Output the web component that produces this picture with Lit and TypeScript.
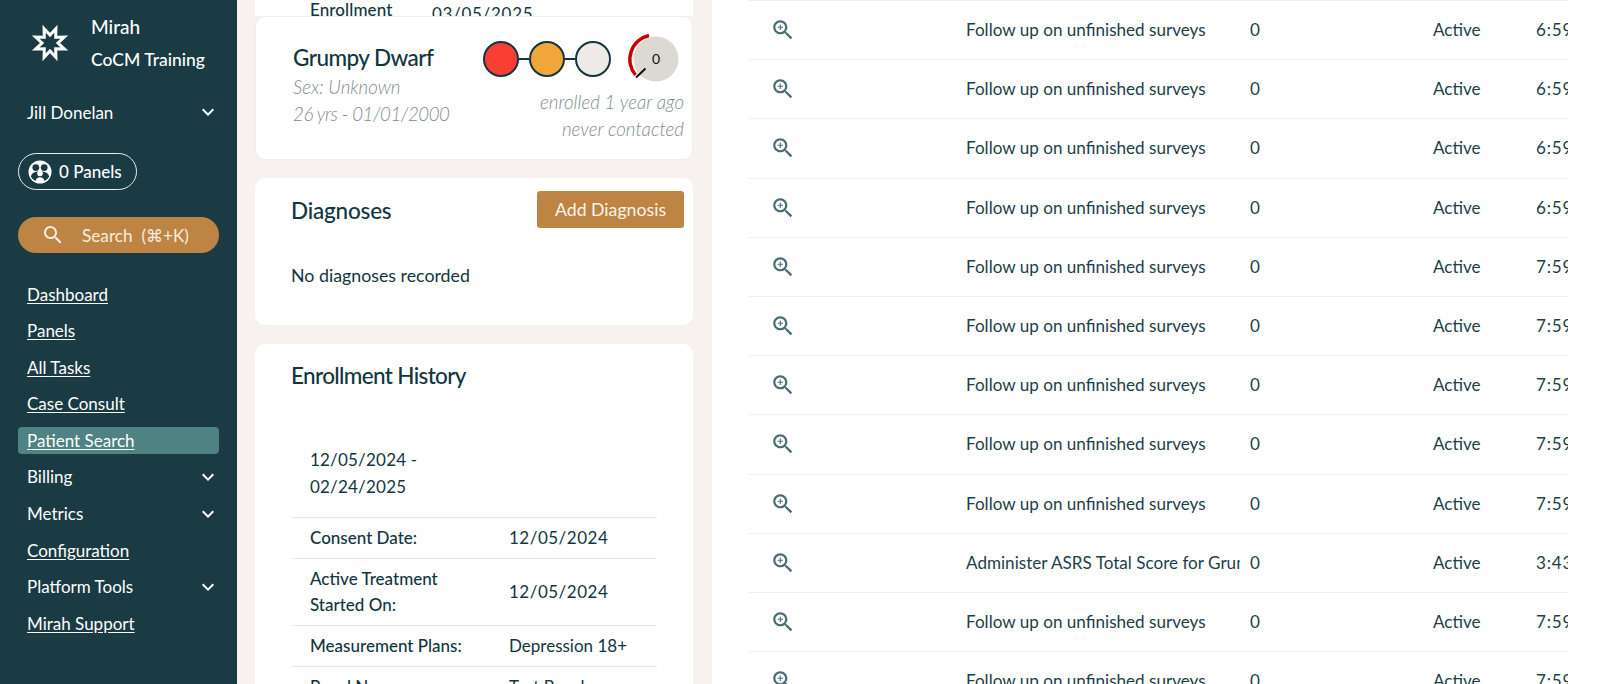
import { LitElement, html, css, svg } from 'lit';
import { customElement } from 'lit/decorators.js';

const chevron = html`<svg class="chev" viewBox="0 0 24 24" width="24" height="24"><path fill="currentColor" d="M16.59 8.59 12 13.17 7.41 8.59 6 10l6 6 6-6z"/></svg>`;

const zoomIcon = html`<svg class="zoom" viewBox="0 0 24 24" width="26" height="26"><path fill="currentColor" d="M15.5 14h-.79l-.28-.27C15.41 12.59 16 11.11 16 9.5 16 5.91 13.09 3 9.5 3S3 5.91 3 9.5 5.91 16 9.5 16c1.61 0 3.09-.59 4.23-1.57l.27.28v.79l5 4.99L20.49 19l-4.99-5zm-6 0C7.01 14 5 11.99 5 9.5S7.01 5 9.5 5 14 7.01 14 9.5 11.99 14 9.5 14z"/><path fill="currentColor" d="M12 10h-2v2H9v-2H7V9h2V7h1v2h2v1z"/></svg>`;

const starPoints = () => {
	const pts: string[] = [];
	for (let i = 0; i < 16; i++) {
		const r = i % 2 === 0 ? 15.5 : 8;
		const a = ((i * 22.5 + 22.5) * Math.PI) / 180;
		pts.push(`${(20 + r * Math.sin(a)).toFixed(1)},${(20 - r * Math.cos(a)).toFixed(1)}`);
	}
	return pts.join(' ');
};

type NavItem = { label: string; link?: boolean; open?: boolean; active?: boolean };

const NAV: NavItem[] = [
	{ label: 'Dashboard', link: true },
	{ label: 'Panels', link: true },
	{ label: 'All Tasks', link: true },
	{ label: 'Case Consult', link: true },
	{ label: 'Patient Search', link: true, active: true },
	{ label: 'Billing', open: true },
	{ label: 'Metrics', open: true },
	{ label: 'Configuration', link: true },
	{ label: 'Platform Tools', open: true },
	{ label: 'Mirah Support', link: true },
];

const FOLLOW = 'Follow up on unfinished surveys';
const TASKS = [
	[FOLLOW, '6:59 PM'],
	[FOLLOW, '6:59 PM'],
	[FOLLOW, '6:59 PM'],
	[FOLLOW, '6:59 PM'],
	[FOLLOW, '7:59 PM'],
	[FOLLOW, '7:59 PM'],
	[FOLLOW, '7:59 PM'],
	[FOLLOW, '7:59 PM'],
	[FOLLOW, '7:59 PM'],
	['Administer ASRS Total Score for Grumpy Dwarf', '3:43 PM'],
	[FOLLOW, '7:59 PM'],
	[FOLLOW, '7:59 PM'],
];

const HISTORY = [
	['Consent Date:', '12/05/2024', 'num'],
	['Active Treatment Started On:', '12/05/2024', 'num'],
	['Measurement Plans:', 'Depression 18+', ''],
	['Panel Name:', 'Test Panel', ''],
];

@customElement('app-root')
export class AppRoot extends LitElement {
	static styles = css`
		:host {
			display: flex;
			width: 1600px;
			height: 684px;
			overflow: hidden;
			font-family: Lato, 'Open Sans', sans-serif;
			font-size: 17px;
			color: #123640;
			background: #f7f2ef;
		}
		.side {
			width: 237px;
			flex: none;
			box-sizing: border-box;
			background: #1a3a44;
			color: #fff;
			padding: 0 18px;
		}
		.brand {
			display: flex;
			height: 88px;
			align-items: center;
			gap: 21px;
			padding-left: 12px;
			box-sizing: border-box;
		}
		.brand svg {
			margin-bottom: 2px;
		}
		.brand-text {
			display: flex;
			flex-direction: column;
			gap: 11px;
			font-size: 17.5px;
			line-height: 22px;
			font-weight: 500;
			margin-bottom: 2px;
		}
		.brand-name {
			font-size: 19px;
		}
		.user {
			display: flex;
			align-items: center;
			justify-content: space-between;
			height: 26px;
			margin-top: 11px;
			padding: 0 0 0 9px;
			font-size: 17px;
		}
		.chev {
			margin-right: -1px;
			color: #fff;
		}
		.pill {
			display: inline-flex;
			align-items: center;
			gap: 7px;
			box-sizing: border-box;
			height: 37px;
			width: 119px;
			margin-top: 28px;
			padding-left: 9px;
			border: 1.5px solid #e8eeee;
			border-radius: 19px;
			font-size: 17px;
			font-weight: 500;
		}
		.search {
			display: flex;
			align-items: center;
			box-sizing: border-box;
			height: 36px;
			margin-top: 27px;
			padding-left: 23px;
			background: #bd8443;
			border-radius: 18px;
			font-size: 17.2px;
			color: #f6ece0;
			white-space: pre;
		}
		.search svg {
			margin-right: 17px;
		}
		.nav {
			display: flex;
			flex-direction: column;
			margin-top: 27.5px;
		}
		.nav-item {
			display: flex;
			align-items: center;
			justify-content: space-between;
			height: 27px;
			margin-bottom: 9.6px;
			padding-left: 9px;
			border-radius: 4px;
			font-size: 17px;
		}
		.nav-item.link span {
			text-decoration: underline;
			text-underline-offset: 2px;
		}
		.nav-item.active {
			background: #4f8283;
		}
		.main {
			flex: 1;
			display: flex;
			min-width: 0;
		}
		.left {
			width: 438px;
			flex: none;
			margin: 0 19px 0 18px;
			display: flex;
			flex-direction: column;
		}
		.peek {
			height: 16px;
			flex: none;
			overflow: hidden;
			background: #fff;
			display: flex;
			padding-left: 55px;
			font-size: 17px;
			line-height: 20px;
		}
		.peek b {
			width: 122px;
			font-weight: 500;
			letter-spacing: 0.1px;
		}
		.peek span {
			margin-top: 4px;
			letter-spacing: 0.7px;
		}
		.card {
			background: #fff;
			border-radius: 10px;
			flex: none;
			box-sizing: border-box;
		}
		.head {
			height: 144px;
			border: 1px solid #efeeec;
			display: flex;
			justify-content: space-between;
			padding: 25px 8px 0 37px;
		}
		.name {
			font-size: 22.5px;
			line-height: 32px;
			font-weight: 500;
			letter-spacing: -0.55px;
		}
		.muted {
			font-style: italic;
			font-weight: 300;
			font-size: 18.7px;
			line-height: 27px;
			color: #7f8c8f;
		}
		.tight {
			letter-spacing: -0.45px;
		}
		.head-right {
			display: flex;
			flex-direction: column;
			align-items: flex-end;
			margin-top: -13px;
		}
		.dots {
			display: flex;
			align-items: center;
			height: 60px;
			margin-right: -1px;
		}
		.dot {
			width: 36px;
			height: 36px;
			box-sizing: border-box;
			border-radius: 50%;
			border: 2px solid #123640;
		}
		.wire {
			width: 10px;
			height: 2px;
			background: #123640;
		}
		.gauge {
			margin-left: 14.7px;
			margin-right: 3.3px;
		}
		.gauge text {
			font: 14px Lato, sans-serif;
			fill: #111;
		}
		.right-text {
			text-align: right;
		}
		.right-text .muted {
			line-height: 26.5px;
		}
		.diag {
			height: 147px;
			margin-top: 18px;
			padding: 13px 9px 0 36px;
		}
		.diag-top {
			display: flex;
			justify-content: space-between;
			align-items: center;
			height: 37px;
		}
		h2 {
			margin: 0;
			font-size: 22.5px;
			font-weight: 500;
			line-height: 32px;
			letter-spacing: -0.2px;
		}
		.diag h2 {
			padding-top: 2px;
		}
		.btn {
			width: 147px;
			height: 37px;
			display: flex;
			align-items: center;
			justify-content: center;
			background: #bd8443;
			border-radius: 3px;
			color: #fbf4ec;
			font-size: 17.7px;
		}
		.none {
			margin-top: 34px;
			line-height: 26px;
			font-size: 17.8px;
		}
		.hist {
			margin-top: 19px;
			flex: 1;
			padding: 16px 36px 0 36px;
			min-height: 0;
			overflow: hidden;
			border-radius: 10px 10px 0 0;
		}
		.hist h2 {
			letter-spacing: -0.65px;
		}
		.range {
			margin-top: 54px;
			padding: 0 19px;
			width: 130px;
			height: 71px;
			line-height: 27px;
			letter-spacing: 0.2px;
		}
		.hrow {
			display: grid;
			grid-template-columns: 199px 1fr;
			align-items: center;
			padding: 7px 0 7px 19px;
			border-top: 1px solid #e9e9e8;
			line-height: 26px;
		}
		.hrow b {
			font-weight: 500;
			padding-right: 20px;
		}
		.hrow .num {
			letter-spacing: 0.5px;
		}
		.tasks {
			flex: 1;
			background: #fff;
			min-width: 0;
			padding: 0 32px 0 37px;
			overflow: hidden;
		}
		.task {
			display: grid;
			grid-template-columns: 217px 284px 183px 103px 1fr;
			align-items: center;
			height: 59.2px;
			box-sizing: border-box;
			border-top: 1px solid #eeeeed;
			white-space: nowrap;
			overflow: hidden;
			font-size: 17.1px;
			color: #1c3f49;
		}
		.task > div {
			overflow: hidden;
			padding-bottom: 1px;
		}
		.task > .icon-cell {
			padding-bottom: 0;
		}
		.task .title {
			margin-right: 10px;
		}
		.task .time {
			letter-spacing: 0.8px;
		}
		.zoom {
			display: block;
			color: #4a6b73;
			margin-left: 21px;
		}
	`;

	render() {
		return html`
			<aside class="side">
				<div class="brand">
					<svg viewBox="0 0 40 40" width="40" height="40">
						<polygon points=${starPoints()} fill="none" stroke="#fff" stroke-width="3" stroke-linejoin="miter"></polygon>
					</svg>
					<div class="brand-text"><div class="brand-name">Mirah</div><div>CoCM Training</div></div>
				</div>
				<div class="user"><span>Jill Donelan</span>${chevron}</div>
				<div class="pill">
					<svg viewBox="0 0 24 24" width="24" height="24">
						<circle cx="12" cy="12" r="11.500" fill="#fff"></circle>
						<circle cx="7.800" cy="7.600" r="3.400" fill="#1a3a44"></circle>
						<circle cx="16.200" cy="7.600" r="3.400" fill="#1a3a44"></circle>
						<path d="M3 17c0-3.500 3-5.500 9-5.500s9 2 9 5.500c-1.500 2.600-4.500 4.500-9 4.500s-7.500-1.900-9-4.500z" fill="#1a3a44"></path>
						<circle cx="12" cy="13.500" r="2.800" fill="#fff"></circle>
						<path d="M7.500 22c0-3 2-4.800 4.500-4.800s4.500 1.800 4.500 4.800z" fill="#fff"></path>
					</svg>
					<span>0 Panels</span>
				</div>
				<div class="search">
					<svg viewBox="0 0 24 24" width="24" height="24"><path fill="#f6ece0" d="M15.5 14h-.79l-.28-.27C15.41 12.59 16 11.11 16 9.5 16 5.91 13.09 3 9.5 3S3 5.91 3 9.5 5.91 16 9.5 16c1.61 0 3.09-.59 4.23-1.57l.27.28v.79l5 4.99L20.49 19l-4.99-5zm-6 0C7.01 14 5 11.99 5 9.5S7.01 5 9.5 5 14 7.01 14 9.5 11.99 14 9.5 14z"/></svg>
					<span>Search  (⌘+K)</span>
				</div>
				<nav class="nav">
					${NAV.map(
						(n) => html`<div class="nav-item ${n.link ? 'link' : ''} ${n.active ? 'active' : ''}">
							<span>${n.label}</span>${n.open ? chevron : ''}
						</div>`
					)}
				</nav>
			</aside>
			<div class="main">
				<div class="left">
					<div class="peek"><b>Enrollment</b><span>03/05/2025</span></div>
					<div class="card head">
						<div class="head-left">
							<div class="name">Grumpy Dwarf</div>
							<div class="muted">Sex: Unknown</div>
							<div class="muted tight">26 yrs - 01/01/2000</div>
						</div>
						<div class="head-right">
							<div class="dots">
								<div class="dot" style="background:#f93e34"></div>
								<div class="wire"></div>
								<div class="dot" style="background:#f2a63a"></div>
								<div class="wire"></div>
								<div class="dot" style="background:#eeeae7"></div>
								<svg class="gauge" viewBox="0 0 56 60" width="56" height="60">
									${svg`<circle cx="30" cy="30" r="22.5" fill="#dcd8d2"></circle>
									<path d="M23 6.5 A24.5 24.5 0 0 0 9.5 46" fill="none" stroke="#c70000" stroke-width="3.5"></path>
									<path d="M10 48.5 L19.5 39.5" stroke="#111" stroke-width="2"></path>
									<text x="30" y="35" text-anchor="middle">0</text>`}
								</svg>
							</div>
							<div class="right-text">
								<div class="muted">enrolled 1 year ago</div>
								<div class="muted">never contacted</div>
							</div>
						</div>
					</div>
					<div class="card diag">
						<div class="diag-top"><h2>Diagnoses</h2><div class="btn">Add Diagnosis</div></div>
						<div class="none">No diagnoses recorded</div>
					</div>
					<div class="card hist">
						<h2>Enrollment History</h2>
						<div class="range">12/05/2024 - 02/24/2025</div>
						${HISTORY.map((r) => html`<div class="hrow"><b>${r[0]}</b><span class=${r[2]}>${r[1]}</span></div>`)}
					</div>
				</div>
				<section class="tasks">
					${TASKS.map(
						(t) => html`<div class="task">
							<div class="icon-cell">${zoomIcon}</div>
							<div class="title">${t[0]}</div>
							<div>0</div>
							<div>Active</div>
							<div class="time">${t[1]}</div>
						</div>`
					)}
				</section>
			</div>
		`;
	}
}
